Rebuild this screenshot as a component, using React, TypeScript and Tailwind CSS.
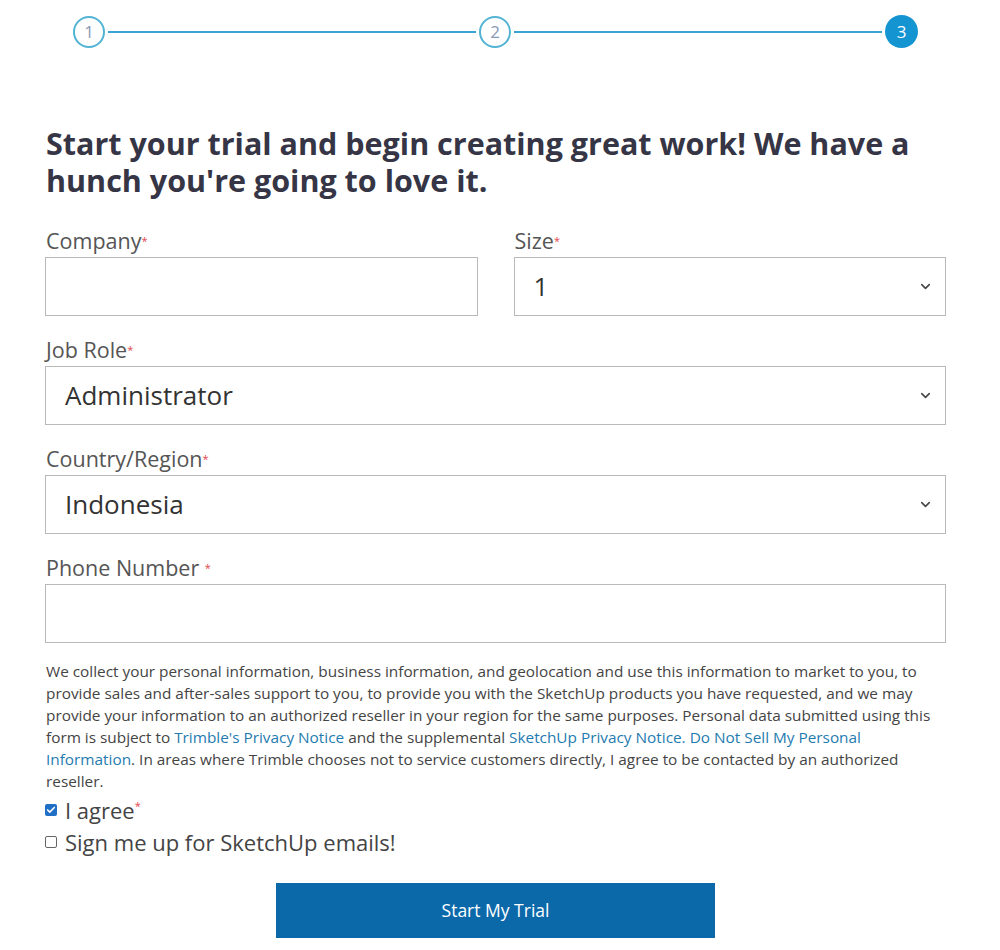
import { ChevronDown, Check } from "lucide-react";

const font = { fontFamily: '"Open Sans", "Noto Sans", sans-serif' };

const Req = () => <sup className="text-[#e0474c] text-[11px] relative -top-[4px]">*</sup>;

const Label = ({ text, space }: { text: string; space?: boolean }) => (
  <label className="block text-[21.5px] leading-[28px] text-[#555555] pl-[1px] mb-[2px]">
    {text}
    {space ? " " : ""}
    <Req />
  </label>
);

const SelectBox = ({ value }: { value: string }) => (
  <div className="h-[59px] border border-[#b9b9b9] bg-white flex items-center justify-between pl-[19px] pr-[12px]">
    <span className="text-[26px] text-[#333333]">{value}</span>
    <ChevronDown className="w-[15px] h-[15px] text-[#444]" strokeWidth={2.5} />
  </div>
);

const Step = ({ n, active }: { n: number; active?: boolean }) => (
  <div
    className={
      active
        ? "w-[33px] h-[33px] rounded-full bg-[#1594d2] text-white flex items-center justify-center text-[17px] shrink-0"
        : "w-[32px] h-[32px] rounded-full border-2 border-[#52b3d4] text-[#8a9ab5] flex items-center justify-center text-[17px] shrink-0"
    }
  >
    {n}
  </div>
);

const App = () => {
  return (
    <div className="min-h-screen bg-white" style={font}>
      <div className="w-[901px] ml-[45px]">
        <div className="flex items-center pt-[15px] px-[28px]">
          <Step n={1} />
          <div className="flex-1 h-[2px] bg-[#3ba3d6] mx-[3px]" />
          <Step n={2} />
          <div className="flex-1 h-[2px] bg-[#3ba3d6] mx-[3px]" />
          <Step n={3} active />
        </div>

        <h1 className="mt-[77px] text-[30.5px] leading-[37px] font-bold text-[#363545] pl-[1px]">
          Start your trial and begin creating great work! We have a hunch you're going to love it.
        </h1>

        <div className="mt-[28px] grid grid-cols-2 gap-x-[36px]">
          <div>
            <Label text="Company" />
            <input className="w-full h-[59px] border border-[#b9b9b9] bg-white outline-none" />
          </div>
          <div>
            <Label text="Size" />
            <SelectBox value="1" />
          </div>
        </div>

        <div className="mt-[20px]">
          <Label text="Job Role" />
          <SelectBox value="Administrator" />
        </div>

        <div className="mt-[20px]">
          <Label text="Country/Region" />
          <SelectBox value="Indonesia" />
        </div>

        <div className="mt-[20px]">
          <Label text="Phone Number" space />
          <input className="w-full h-[59px] border border-[#b9b9b9] bg-white outline-none" />
        </div>

        <p className="mt-[17px] text-[15.35px] leading-[22px] text-[#444444] pl-[1px]">
          We collect your personal information, business information, and geolocation and use this information to market to you, to provide sales and after-sales support to you, to provide you with the SketchUp products you have requested, and we may provide your information to an authorized reseller in your region for the same purposes. Personal data submitted using this form is subject to{" "}
          <a className="text-[#1f7bb0]">Trimble's Privacy Notice</a> and the supplemental{" "}
          <a className="text-[#1f7bb0]">SketchUp Privacy Notice.</a>{" "}
          <a className="text-[#1f7bb0]">Do Not Sell My Personal Information</a>. In areas where Trimble chooses not to service customers directly, I agree to be contacted by an authorized reseller.
        </p>

        <div className="mt-[2px]">
          <div className="flex items-center h-[32px] text-[22px] text-[#444444]">
            <span className="w-[12px] h-[12px] rounded-[2px] bg-[#1f6fc6] flex items-center justify-center mr-[8px]">
              <Check className="w-[10px] h-[10px] text-white" strokeWidth={4} />
            </span>
            I agree
            <Req />
          </div>
          <div className="flex items-center h-[32px] text-[22px] text-[#444444]">
            <span className="w-[12px] h-[12px] rounded-[2px] border border-[#666] bg-white mr-[8px]" />
            Sign me up for SketchUp emails!
          </div>
        </div>

        <div className="flex justify-center mt-[25px]">
          <button className="w-[439px] h-[55px] bg-[#0b69aa] text-white text-[17.5px]">Start My Trial</button>
        </div>
      </div>
    </div>
  );
};

export default App;
